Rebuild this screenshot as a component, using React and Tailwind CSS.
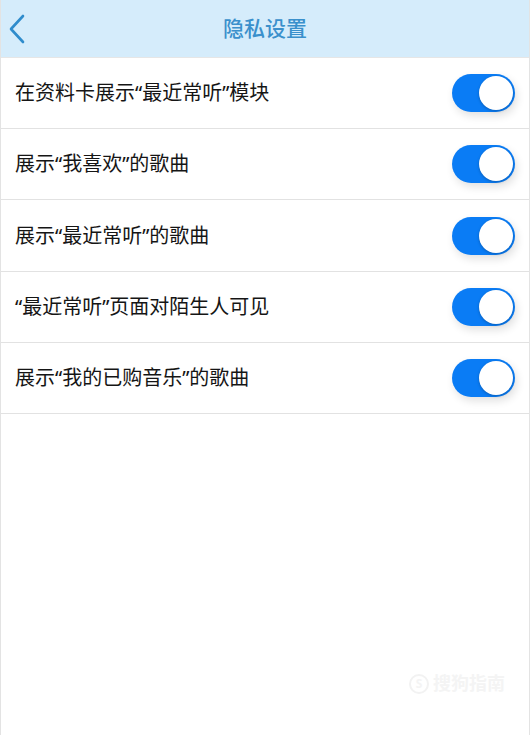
import React from "react";

const rows = [
  "在资料卡展示“最近常听”模块",
  "展示“我喜欢”的歌曲",
  "展示“最近常听”的歌曲",
  "“最近常听”页面对陌生人可见",
  "展示“我的已购音乐”的歌曲",
];

function Toggle() {
  return (
    <div className="relative w-[63px] h-[38px] rounded-full bg-[#0a7cf5] shadow-[2px_4px_8px_rgba(0,0,0,0.12)]">
      <div className="absolute right-[2px] top-[2px] w-[34px] h-[34px] rounded-full bg-white shadow-[0_1px_3px_rgba(0,0,0,0.25)]" />
    </div>
  );
}

export default function App() {
  return (
    <div
      className="w-[530px] h-[735px] bg-white border-x border-[#e3e3e3] flex flex-col relative overflow-hidden"
      style={{ fontFamily: '"Noto Sans", "Noto Sans CJK SC", sans-serif' }}
    >
      <div className="h-[58px] bg-[#d5ecfb] flex items-center relative shrink-0 border-b border-[#e6e6e6]">
        <svg className="absolute left-[7px] top-[14px]" width="18" height="30" viewBox="0 0 18 30">
          <path d="M15 2 L3 15 L15 28" fill="none" stroke="#2f8ccc" strokeWidth="2.6" strokeLinecap="round" strokeLinejoin="round" />
        </svg>
        <div className="flex-1 text-center text-[21px] font-medium text-[#3a90cc] leading-none">隐私设置</div>
      </div>
      {rows.map((t, i) => (
        <div key={t} className={`${i === 2 ? "h-[72px]" : "h-[71px]"} flex items-center justify-between pl-[14px] pr-[14px] border-b border-[#e2e2e2] shrink-0`}>
          <span className="text-[20px] text-[#151515] leading-none">{t}</span>
          <Toggle />
        </div>
      ))}
      <div className="absolute right-[24px] bottom-[38px] flex items-center gap-1 text-[#f4f4f4] text-[18px] font-bold">
        <span className="w-[20px] h-[20px] rounded-full border-2 border-[#f2f2f2] flex items-center justify-center text-[12px]">S</span>
        <span>搜狗指南</span>
      </div>
    </div>
  );
}
